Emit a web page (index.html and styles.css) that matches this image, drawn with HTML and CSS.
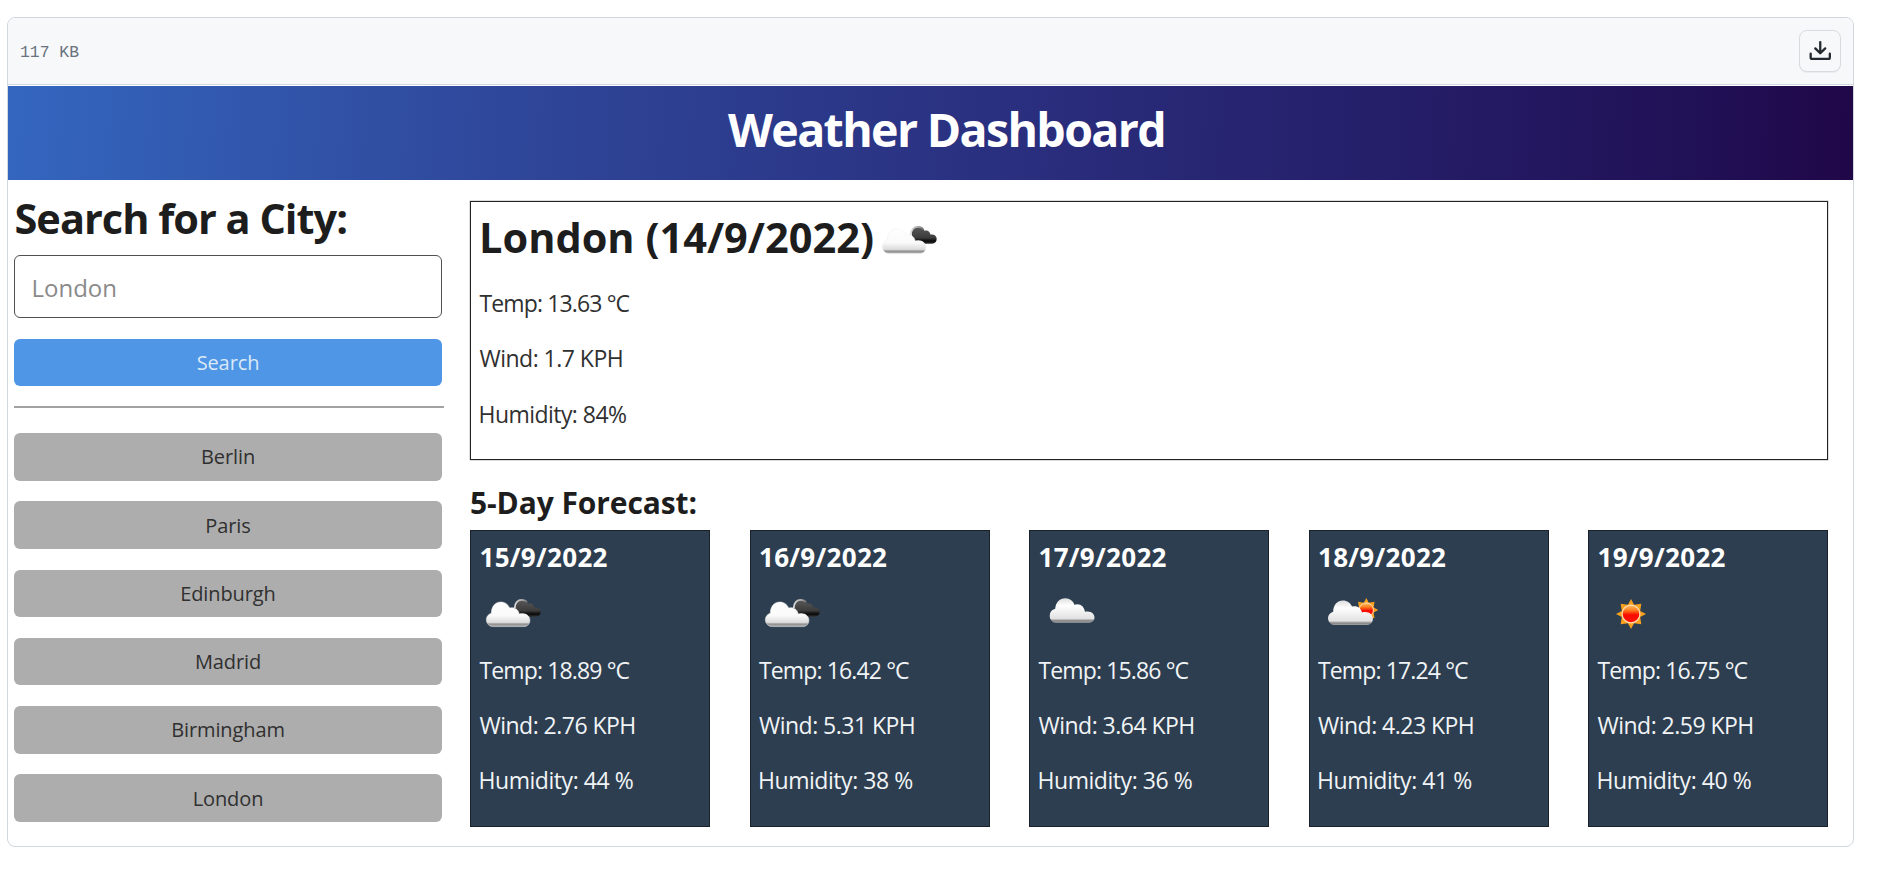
FILE: index.html
```html
<!DOCTYPE html>
<html lang="en">
<head>
<meta charset="utf-8">
<title>Weather Dashboard</title>
<link rel="stylesheet" href="styles.css">
</head>
<body>
<svg class="defs" width="0" height="0" aria-hidden="true">
  <defs>
    <linearGradient id="white" x1="0" y1="0" x2="0" y2="1">
      <stop offset="0" stop-color="#fff"/><stop offset=".55" stop-color="#fafafa"/><stop offset=".83" stop-color="#dcdcdc"/><stop offset=".9" stop-color="#909090"/><stop offset="1" stop-color="#b5b5b5"/>
    </linearGradient>
    <linearGradient id="soft" x1="0" y1="0" x2="0" y2="1">
      <stop offset="0" stop-color="#dedede"/><stop offset=".3" stop-color="#fff"/><stop offset=".83" stop-color="#e2e2e2"/><stop offset=".92" stop-color="#858585"/><stop offset="1" stop-color="#a5a5a5"/>
    </linearGradient>
    <linearGradient id="dark" x1="0" y1="0" x2="0" y2="1">
      <stop offset="0" stop-color="#5a5a5a"/><stop offset=".65" stop-color="#3c3c3c"/><stop offset=".85" stop-color="#080808"/><stop offset="1" stop-color="#333"/>
    </linearGradient>
    <linearGradient id="rim" gradientUnits="userSpaceOnUse" x1="35" y1="20" x2="48" y2="18">
      <stop offset="0" stop-color="#d8d8d8"/><stop offset=".6" stop-color="#aaa"/><stop offset="1" stop-color="#666"/>
    </linearGradient>
    <linearGradient id="core" x1="0" y1="0" x2="0" y2="1">
      <stop offset="0" stop-color="#ffc46b"/><stop offset=".3" stop-color="#ff7a1c"/><stop offset=".55" stop-color="#f80a00"/><stop offset="1" stop-color="#ff1400"/>
    </linearGradient>
    <path id="cloud" d="M7 24.600A6.800 6.800 0 0 1 0 17.800C0 14.600 2 12 5 11.200C5 4.600 9 0 14.500 0C18.600 0 22 2.500 23.300 6.100C28 4.600 32.200 7.500 33 12C39 10.400 43.600 13.600 43.600 18.300C43.600 22 41.300 24.600 37.500 24.600Z"/>
    <path id="longcloud" d="M6 24.400A6 6.500 0 0 1 0 17.500C0 14 2 11.500 5.500 10.500C6 4 10.300 0 15.500 0C20.300 0 23.800 3 24.700 6.500C30 4.500 34.500 8 35.300 13.500C41 12 44.800 15.300 44.800 19C44.800 22.500 42.400 24.400 39.500 24.400Z"/>
    <path id="rays" d="M0-15L3.100-9.200L10.300-10.300L9.200-3.100L15 0L9.200 3.100L10.300 10.300L3.100 9.200L0 15L-3.100 9.200L-10.300 10.300L-9.200 3.100L-15 0L-9.200-3.100L-10.300-10.300L-3.100-9.200Z"/>
    <g id="sun">
      <use href="#rays" fill="#f9a01f"/>
      <circle r="8.900" fill="url(#core)" stroke="#ffdcae" stroke-width="1.200"/>
    </g>
    <symbol id="broken" viewBox="0 0 62 58">
      <path fill="url(#dark)" d="M36 30V20C37 16.500 40 15 43 15.500C46 16 47.500 17.600 48.500 19.800C51.500 18.600 54 20.500 54.400 23.600C58 22.700 60.700 25 60.700 27.800C60.700 30.800 59 32.700 56 32.700H40Z"/>
      <path d="M34.800 24C34.800 18.500 38.200 15.800 41.500 15.800C44.500 15.800 46 16.500 47 18" fill="none" stroke="url(#rim)" stroke-width="1.800"/>
      <use href="#cloud" x="6.300" y="18" fill="url(#white)" stroke="#ececec" stroke-width=".5"/>
    </symbol>
    <symbol id="cloudy" viewBox="0 0 62 58"><use href="#longcloud" x="10.700" y="14.300" fill="url(#soft)"/></symbol>
    <symbol id="partly" viewBox="0 0 62 58">
      <use href="#sun" transform="translate(48.300 26) scale(.8)"/>
      <use href="#cloud" transform="translate(10 16.500) scale(1.030 1)" fill="url(#soft)"/>
    </symbol>
    <symbol id="sunny" viewBox="0 0 62 58"><use href="#sun" transform="translate(33 30)"/></symbol>
  </defs>
</svg>

<main class="frame">
  <header class="toolbar">
    <span class="size">117 KB</span>
    <button class="download" aria-label="Download">
      <svg width="24.500" height="24" viewBox="0 0 16 16" preserveAspectRatio="none" fill="#24292f"><path d="M2.750 14A1.750 1.750 0 0 1 1 12.250v-2.500a.75.75 0 0 1 1.500 0v2.500c0 .138.112.25.25.25h10.500a.25.25 0 0 0 .25-.25v-2.500a.75.75 0 0 1 1.500 0v2.500A1.750 1.750 0 0 1 13.250 14Z"/><path d="M7.250 7.689V2a.75.75 0 0 1 1.500 0v5.689l1.970-1.969a.749.749 0 1 1 1.060 1.060l-3.250 3.250a.749.749 0 0 1-1.060 0L4.220 6.780a.749.749 0 1 1 1.060-1.060l1.970 1.969Z"/></svg>
    </button>
  </header>
  <div class="banner"><h1>Weather Dashboard</h1></div>
  <div class="content">
    <aside class="sidebar">
      <h2 class="search-title">Search for a City:</h2>
      <input class="city-input" type="text" placeholder="London">
      <button class="btn search-btn">Search</button>
      <hr class="rule">
      <div class="history">
        <button class="btn">Berlin</button>
        <button class="btn">Paris</button>
        <button class="btn">Edinburgh</button>
        <button class="btn">Madrid</button>
        <button class="btn">Birmingham</button>
        <button class="btn">London</button>
      </div>
    </aside>
    <section class="weather">
      <article class="today">
        <div class="today-head"><h2>London (14/9/2022)</h2><svg class="icon"><use href="#broken"/></svg></div>
        <p class="temp">Temp: 13.63 °C</p>
        <p class="wind">Wind: 1.7 KPH</p>
        <p class="hum">Humidity: 84%</p>
      </article>
      <h3 class="forecast-title">5-Day Forecast:</h3>
      <div class="forecast">
        <article class="day"><h4>15/9/2022</h4><svg class="icon"><use href="#broken"/></svg><p class="temp">Temp: 18.89 °C</p><p class="wind">Wind: 2.76 KPH</p><p class="hum">Humidity: 44 %</p></article>
        <article class="day"><h4>16/9/2022</h4><svg class="icon"><use href="#broken"/></svg><p class="temp">Temp: 16.42 °C</p><p class="wind">Wind: 5.31 KPH</p><p class="hum">Humidity: 38 %</p></article>
        <article class="day"><h4>17/9/2022</h4><svg class="icon"><use href="#cloudy"/></svg><p class="temp">Temp: 15.86 °C</p><p class="wind">Wind: 3.64 KPH</p><p class="hum">Humidity: 36 %</p></article>
        <article class="day"><h4>18/9/2022</h4><svg class="icon"><use href="#partly"/></svg><p class="temp">Temp: 17.24 °C</p><p class="wind">Wind: 4.23 KPH</p><p class="hum">Humidity: 41 %</p></article>
        <article class="day"><h4>19/9/2022</h4><svg class="icon"><use href="#sunny"/></svg><p class="temp">Temp: 16.75 °C</p><p class="wind">Wind: 2.59 KPH</p><p class="hum">Humidity: 40 %</p></article>
      </div>
    </section>
  </div>
</main>
</body>
</html>
```
FILE: styles.css
```css
* { box-sizing: border-box; }
body { margin: 0; padding: 17px 0 0 7px; background: #fff; color: #1d1d1d; font-family: "Open Sans", sans-serif; overflow: hidden; }
h1, h2, h3, h4, p { margin: 0; white-space: nowrap; }
.defs { display: block; height: 0; }

.frame { width: 1847px; height: 830px; border: 1px solid #d0d7de; border-radius: 8px; overflow: hidden; }
.toolbar { display: flex; align-items: center; justify-content: space-between; height: 67px; padding: 0 12px; background: #f6f8fa; border-bottom: 1px solid #d0d7de; }
.size { padding-top: 3px; color: #6a737d; font: 16.4px/20px "Liberation Mono", monospace; white-space: pre; }
.download { display: flex; align-items: center; justify-content: center; width: 42px; height: 42px; padding: 0; border: 1px solid #d9dcdf; border-radius: 8px; background: #f6f8fa; box-shadow: 0 1px 1px rgba(27, 31, 36, .05); }

.banner { height: 94px; margin-top: 1px; padding-left: 32px; background: linear-gradient(92deg, #3466bf 0%, #2f489b 26%, #2a3080 53%, #211157 91%, #200748 100%); text-align: center; }
.banner h1 { color: #fff; font-size: 46.5px; line-height: 86px; letter-spacing: -1.65px; }

.content { display: flex; }
.sidebar { width: 438px; padding: 8px 8px 0 6px; display: flex; flex-direction: column; }
.search-title { padding-left: .5px; font-size: 41.5px; line-height: 60px; letter-spacing: -1px; }
.city-input { width: 428px; height: 63px; margin-top: 7px; padding: 2px 17px 0 16.5px; border: 1px solid #505050; border-radius: 6px; font: 24px "Open Sans", sans-serif; }
.city-input::placeholder { color: #8a8a8a; opacity: 1; }
.btn { width: 428px; height: 47.6px; padding: 0; border: 0; border-radius: 6px; background: #adadad; color: #303030; font: 20px "Open Sans", sans-serif; letter-spacing: -.1px; }
.search-btn { height: 47px; margin-top: 21px; background: #4f96e6; color: #dbe9f8; }
.rule { width: 430px; height: 2px; margin: 20px 0 25px; border: 0; background: #a2a2a2; }
.history { display: flex; flex-direction: column; gap: 20.7px; }

.weather { width: 1358px; margin-left: 24px; padding-top: 21px; }
.today { height: 259px; padding: 0 8.5px; border: 1px solid #222; box-shadow: 0 0 0 .5px #bbb; color: #303030; }
.today-head { display: flex; height: 74px; color: #1d1d1d; }
.today-head h2 { width: 397px; margin-left: -.5px; font-size: 41.5px; line-height: 71px; }
.today-head .icon { margin-top: 9px; }
.icon { display: block; flex: none; width: 62px; height: 58px; }
.today p, .day p { font-size: 23px; line-height: 55.4px; }
.temp { letter-spacing: -.87px; }
.wind { letter-spacing: -.52px; }
.hum { margin-left: -1px; letter-spacing: -.45px; }
.today .hum { letter-spacing: -.55px; }
.forecast-title { height: 70px; padding-top: 21px; font-size: 30px; line-height: 43px; letter-spacing: -.1px; }
.forecast { display: grid; grid-template-columns: repeat(5, 240px); justify-content: space-between; }
.day { height: 297px; padding: 0 8.5px; border: 1px solid #1b2129; background: #2d3e50; color: #f1f4f6; }
.day h4 { color: #fff; font-size: 26px; line-height: 52.5px; letter-spacing: .3px; }
.day .icon { margin-bottom: 1.5px; }
.day p { line-height: 54.8px; }
```
